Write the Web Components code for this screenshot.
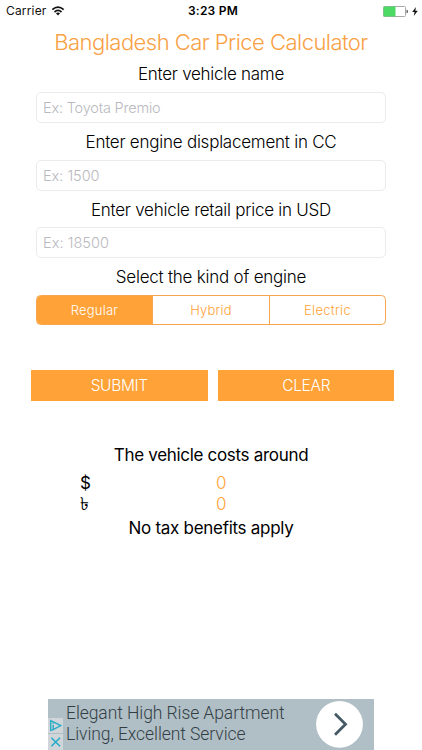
<!DOCTYPE html>
<html lang="en"><head><meta charset="utf-8"><title>Bangladesh Car Price Calculator</title>
<style>
html,body{margin:0;width:422px;height:750px;overflow:hidden;background:#fff}
</style></head><body>
<car-calculator></car-calculator>
<script>
const define=(name,html,setup)=>customElements.define(name,class extends HTMLElement{
  connectedCallback(){
    if(this.shadowRoot)return;
    const t=document.createElement('template');t.innerHTML=html;
    this.attachShadow({mode:'open'}).append(t.content.cloneNode(true));
    if(setup)setup(this,this.shadowRoot);
  }
});

// Text whose tracking is adjusted so that the run spans the width in its "w" attribute.
define('fit-text',`<style>:host{display:inline-block;white-space:pre;flex:none}span{display:inline-block}</style><span><slot></slot></span>`,(el,root)=>{
  const s=root.querySelector('span'),w=+el.getAttribute('w');
  if(!w)return;
  const n=el.textContent.length,d=(w-s.getBoundingClientRect().width)/n;
  s.style.letterSpacing=d.toFixed(4)+'px';
});

define('status-bar',`<style>
:host{display:grid;grid-template-columns:1fr auto 1fr;align-items:center;height:22px;padding:0 4px 0 6px;font-size:12px;line-height:22px;color:#111}
.l,.r{display:flex;align-items:center}.l{gap:4px}.r{justify-content:flex-end;gap:4px}
b{font-weight:600;color:#000;padding-left:2px}svg{display:block}
</style>
<div class="l"><fit-text w="40.5">Carrier</fit-text>
<svg width="14" height="10" viewBox="0 0 14 10" fill="none" stroke="#111" stroke-width="1.7"><path d="M1.3 3.7Q7-1.5 12.7 3.7M3.5 6Q7 2.9 10.5 6"/><path d="M4.9 7.3Q7 5.6 9.1 7.3L7 9.6Z" fill="#111" stroke="none"/></svg></div>
<b><fit-text w="50">3:23 PM</fit-text></b>
<div class="r"><svg width="25" height="11" viewBox="0 0 25 11"><rect x=".5" y=".5" width="22" height="10" rx="1" fill="#fff" stroke="#aaa"/><path d="M.5 .5H12.5V10.5H.5Z" fill="#4cd964"/><path d="M23.5 3.5Q25 4 25 5.5T23.5 7.5Z" fill="#555"/></svg>
<svg width="6" height="9" viewBox="0 0 6 9"><path d="M4 0L.2 5H2.6L1.8 9L5.8 3.7H3.3Z" fill="#111"/></svg></div>`);

define('form-field',`<style>
:host{display:flex;flex-direction:column;height:67.67px}
.label{box-sizing:border-box;height:36.6px;padding-top:1.4px;display:flex;align-items:center;justify-content:center;font-size:17px;font-weight:300;color:#000}
.box{box-sizing:border-box;height:31px;border:1px solid #ebebeb;border-radius:5px;padding-left:6px;display:flex;align-items:center;font-size:14.5px;font-weight:300;color:#b8b8be;margin:0 36px}
</style><div class="label"><slot name="label"></slot></div><div class="box"><slot></slot></div>`);

define('segmented-control',`<style>
:host{display:grid;grid-template-columns:115px 117px 1fr;box-sizing:border-box;height:30px;margin:0 36px;border:1px solid #f6a550;border-radius:4.5px;overflow:hidden;font-size:13px;font-weight:350;color:#ffa237}
::slotted(div){display:flex;align-items:center;justify-content:center;border-left:1px solid #f6a550}
::slotted(div:first-child){border-left:0;background:#ffa237;color:#fff}
</style><slot></slot>`);

define('action-button',`<style>
:host{display:flex;align-items:center;justify-content:center;height:30.5px;background:#ffa237;color:#fff;font-size:15.5px;font-weight:350}
</style><slot></slot>`);

define('price-results',`<style>
:host{display:flex;flex-direction:column;align-items:center;font-size:17px;font-weight:400;color:#000}
.row{display:grid;grid-template-columns:80px 136px 1fr;width:422px;height:20.7px;line-height:20.7px;align-items:center}
.row>:first-child{grid-column:2}.v{color:#ffa237;font-weight:300}
.taka{font-size:18px;line-height:18px;height:18px}
.line{height:27px;display:flex;align-items:center}
.gap{height:4.9px}
</style>
<div class="line"><fit-text w="194.5">The vehicle costs around</fit-text></div>
<div class="gap"></div>
<div class="row"><span>$</span><span class="v">0</span></div>
<div class="row"><span class="taka">৳</span><span class="v">0</span></div>
<div class="line"><fit-text w="165">No tax benefits apply</fit-text></div>`);

define('ad-banner',`<style>
:host{display:grid;grid-template-columns:16px 1fr 47px;column-gap:2px;box-sizing:border-box;width:326px;height:51px;padding-right:11px;background:#b0bec5;font-family:Roboto,sans-serif;font-weight:300;font-size:17.5px;line-height:20.5px;color:#333f45;overflow:hidden}
.marks{align-self:end;display:grid;gap:1px}svg{display:block}.marks svg{background:#cfd5d8}
.copy{padding-top:4px}.copy fit-text{display:block}
</style>
<div class="marks">
<svg width="15" height="15" viewBox="0 0 15 15" fill="none" stroke="#27acc9" stroke-width="1.4"><path d="M5.2 11.6L2.7 12.4V2.6L12.8 7.5L5.2 11.6V6.8M5.2 4.7V5.7"/></svg>
<svg width="15" height="16" viewBox="0 0 15 16" fill="none" stroke="#27acc9" stroke-width="1.6"><path d="M3.4 3.7L12 12.3M12 3.7L3.4 12.3"/></svg></div>
<div class="copy"><fit-text w="218.5">Elegant High Rise Apartment</fit-text><fit-text w="179.5">Living, Excellent Service</fit-text></div>
<svg width="47" height="51" viewBox="0 0 47 51"><circle cx="23.5" cy="25.3" r="23.4" fill="#fff"/><path d="M19 14.8L29.5 25.3L19 35.8" fill="none" stroke="#455a64" stroke-width="2.8"/></svg>`);

define('car-calculator',`<style>
:host{display:flex;flex-direction:column;width:422px;height:750px;background:#fff;font-family:Inter,"Liberation Sans",sans-serif;font-weight:400;line-height:normal}
h1{margin:0;padding-top:6px;height:27.3px;display:flex;justify-content:center;align-items:center;font-size:22px;font-weight:300;color:#f9a145}
.kind{height:36.7px;display:flex;align-items:center;justify-content:center;font-size:17px;font-weight:300}
.actions{display:grid;grid-template-columns:177px 176px;gap:10.5px;margin:45.3px 0 0 30.7px}
price-results{margin-top:40.8px}
ad-banner{margin:auto 0 0 48px}
</style>
<status-bar></status-bar>
<h1><fit-text w="313.5">Bangladesh Car Price Calculator</fit-text></h1>
<form-field><fit-text slot="label" w="146">Enter vehicle name</fit-text><fit-text w="117.5">Ex: Toyota Premio</fit-text></form-field>
<form-field><fit-text slot="label" w="251">Enter engine displacement in CC</fit-text><fit-text w="56.5">Ex: 1500</fit-text></form-field>
<form-field><fit-text slot="label" w="240">Enter vehicle retail price in USD</fit-text><fit-text w="66">Ex: 18500</fit-text></form-field>
<div class="kind"><fit-text w="190.5">Select the kind of engine</fit-text></div>
<segmented-control><div><fit-text w="47.5">Regular</fit-text></div><div><fit-text w="41.5">Hybrid</fit-text></div><div><fit-text w="47">Electric</fit-text></div></segmented-control>
<div class="actions"><action-button><fit-text w="57">SUBMIT</fit-text></action-button><action-button><fit-text w="48">CLEAR</fit-text></action-button></div>
<price-results></price-results>
<ad-banner></ad-banner>`);
</script></body></html>
